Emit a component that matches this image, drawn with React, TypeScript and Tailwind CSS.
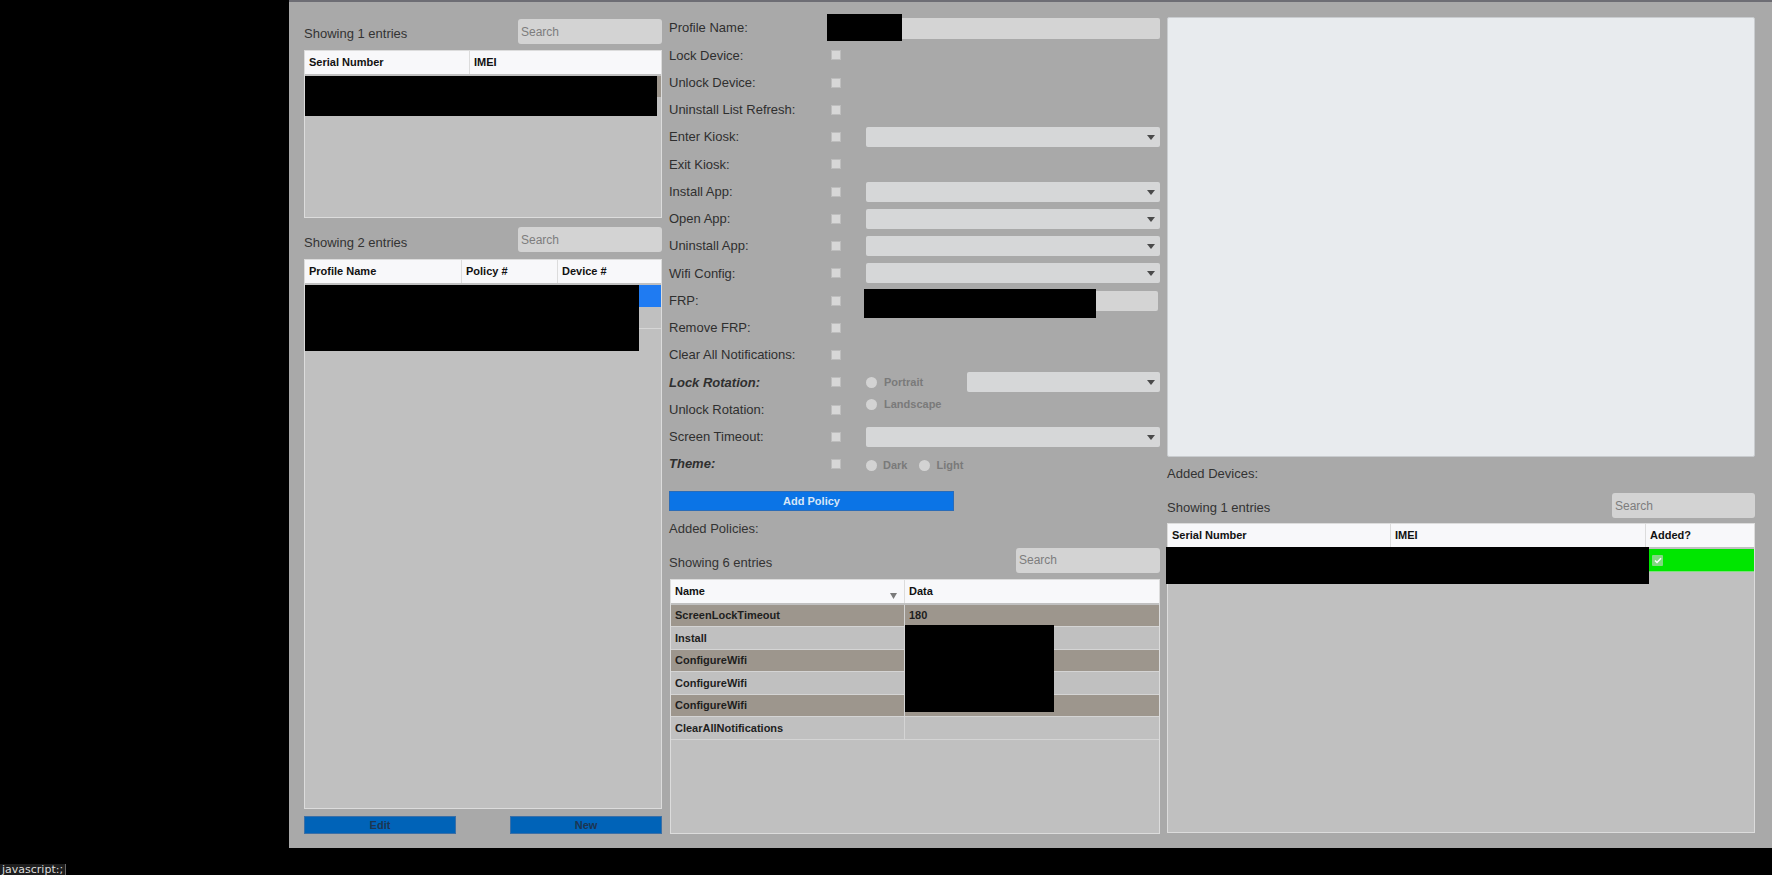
import React from "react";

const Caret = () => (
  <svg className="absolute right-[5px] top-[8px]" width="8" height="5" viewBox="0 0 8 5">
    <polygon points="0,0 8,0 4,5" fill="#4a4a4a" />
  </svg>
);

const SelectBox = ({ className = "" }: { className?: string }) => (
  <div className={`relative h-[20px] rounded-[2px] bg-[#d6d7d8] ${className}`}>
    <Caret />
  </div>
);

const SearchBox = ({ className = "" }: { className?: string }) => (
  <div
    className={`h-[25px] rounded-[3px] bg-[#d3d3d3] text-[12px] text-[#7d7d7d] flex items-center pl-[3px] ${className}`}
  >
    Search
  </div>
);

const Check = () => (
  <div className="w-[10px] h-[10px] bg-[#d7d7d7] border border-[#bdbdbd] shrink-0" />
);

const Radio = () => (
  <div className="w-[11px] h-[11px] rounded-full bg-[#d3d3d3] shrink-0" />
);

function Row({
  label,
  italic = false,
  children,
}: {
  label: string;
  italic?: boolean;
  children?: React.ReactNode;
}) {
  return (
    <div className="flex items-center h-[27.25px]">
      <div
        className={`w-[162px] text-[13px] text-[#2f2f2f] ${italic ? "font-bold italic" : ""}`}
      >
        {label}
      </div>
      <Check />
      <div className="flex-1 ml-[25px] flex items-center">{children}</div>
    </div>
  );
}

const HeaderCell = ({
  children,
  className = "",
}: {
  children?: React.ReactNode;
  className?: string;
}) => (
  <div
    className={`h-full flex items-center pl-[4px] text-[11px] font-bold text-[#111] border-r border-[#dcdcdc] ${className}`}
  >
    {children}
  </div>
);

export default function App() {
  const policies = [
    { name: "ScreenLockTimeout", data: "180", striped: true },
    { name: "Install", data: "", striped: false },
    { name: "ConfigureWifi", data: "", striped: true },
    { name: "ConfigureWifi", data: "", striped: false },
    { name: "ConfigureWifi", data: "", striped: true },
    { name: "ClearAllNotifications", data: "", striped: false },
  ];

  return (
    <div className="w-[1772px] h-[875px] bg-black relative overflow-hidden font-['Liberation_Sans',Arial,sans-serif]">
      <div className="flex h-[848px]">
        <div className="w-[289px] bg-black shrink-0" />
        <div className="flex-1 bg-[#a9a9a9] border-t-2 border-[#6d6d74] flex pl-[15px] pr-[17px] gap-[7px]">
          {/* LEFT COLUMN */}
          <div className="w-[358px] flex flex-col pt-[17px]">
            <div className="flex items-center justify-between h-[25px]">
              <div className="text-[13px] text-[#333] pt-[4px]">Showing 1 entries</div>
              <SearchBox className="w-[144px]" />
            </div>
            <div className="mt-[6px] h-[168px] flex flex-col border border-[#dcdcdc] bg-[#c0c0c0] relative">
              <div className="h-[23px] bg-[#f8f8fa] grid grid-cols-[165px_1fr] shrink-0">
                <HeaderCell>Serial Number</HeaderCell>
                <HeaderCell className="border-r-0">IMEI</HeaderCell>
              </div>
              <div className="h-[21px] mt-[2px] bg-[#9d968d]" />
              <div className="absolute left-0 top-[25px] w-[352px] h-[40px] bg-black" />
            </div>
            <div className="mt-[9px] flex items-center justify-between h-[25px]">
              <div className="text-[13px] text-[#333] pt-[6px]">Showing 2 entries</div>
              <SearchBox className="w-[144px]" />
            </div>
            <div className="mt-[7px] h-[550px] flex flex-col border border-[#dcdcdc] bg-[#c0c0c0] relative">
              <div className="h-[23px] bg-[#f8f8fa] grid grid-cols-[157px_96px_1fr] shrink-0">
                <HeaderCell>Profile Name</HeaderCell>
                <HeaderCell>Policy #</HeaderCell>
                <HeaderCell className="border-r-0">Device #</HeaderCell>
              </div>
              <div className="h-[22px] mt-[2px] bg-[#1f7bf2]" />
              <div className="h-[22px] border-b border-[#d6d6d6]" />
              <div className="absolute left-0 top-[25px] w-[334px] h-[66px] bg-black" />
            </div>
            <div className="mt-[7px] flex justify-between">
              <div className="w-[152px] h-[18px] bg-[#0063b8] border border-[#3b6fa6] flex items-center justify-center text-[11px] font-bold text-[#1d3552]">
                Edit
              </div>
              <div className="w-[152px] h-[18px] bg-[#0063b8] border border-[#3b6fa6] flex items-center justify-center text-[11px] font-bold text-[#1d3552]">
                New
              </div>
            </div>
          </div>

          {/* MIDDLE COLUMN */}
          <div className="w-[491px] flex flex-col pt-[12.5px]">
            <div className="flex items-center h-[27.25px]">
              <div className="w-[158px] text-[13px] text-[#2f2f2f]">Profile Name:</div>
              <div className="flex-1 h-[21px] bg-[#d4d4d4] rounded-[2px] relative">
                <div className="absolute left-0 top-[-4px] w-[75px] h-[27px] bg-black" />
              </div>
            </div>
            <Row label="Lock Device:" />
            <Row label="Unlock Device:" />
            <Row label="Uninstall List Refresh:" />
            <Row label="Enter Kiosk:">
              <SelectBox className="w-full" />
            </Row>
            <Row label="Exit Kiosk:" />
            <Row label="Install App:">
              <SelectBox className="w-full" />
            </Row>
            <Row label="Open App:">
              <SelectBox className="w-full" />
            </Row>
            <Row label="Uninstall App:">
              <SelectBox className="w-full" />
            </Row>
            <Row label="Wifi Config:">
              <SelectBox className="w-full" />
            </Row>
            <Row label="FRP:">
              <div className="w-full ml-[-2px] h-[20px] bg-[#d4d4d4] rounded-[2px] relative">
                <div className="absolute left-0 top-[-2px] w-[232px] h-[29px] bg-black" />
              </div>
            </Row>
            <Row label="Remove FRP:" />
            <Row label="Clear All Notifications:" />
            <div className="flex items-start h-[27.25px]">
              <div className="w-[162px] h-[27.25px] flex items-center text-[13px] font-bold italic text-[#2f2f2f]">
                Lock Rotation:
              </div>
              <div className="h-[27.25px] flex items-center">
                <Check />
              </div>
              <div className="flex-1 ml-[25px] flex items-start">
                <div className="w-[101px] flex flex-col mt-[2.6px]">
                  <div className="h-[22px] flex items-center gap-[7px]">
                    <Radio />
                    <span className="text-[11px] font-bold text-[#7a7a7a]">Portrait</span>
                  </div>
                  <div className="h-[22px] flex items-center gap-[7px]">
                    <Radio />
                    <span className="text-[11px] font-bold text-[#7a7a7a]">Landscape</span>
                  </div>
                </div>
                <SelectBox className="flex-1 mt-[3.6px]" />
              </div>
            </div>
            <Row label="Unlock Rotation:" />
            <Row label="Screen Timeout:">
              <SelectBox className="w-full" />
            </Row>
            <Row label="Theme:" italic>
              <div className="flex items-center gap-[6px] pt-[3px]">
                <Radio />
                <span className="text-[11px] font-bold text-[#7a7a7a] mr-[6px]">Dark</span>
                <Radio />
                <span className="text-[11px] font-bold text-[#7a7a7a]">Light</span>
              </div>
            </Row>
            <div className="mt-[13px] w-[285px] h-[20px] bg-[#0b74e6] border border-[#2a6cb8] flex items-center justify-center text-[11px] font-bold text-[#d6e6f8]">
              Add Policy
            </div>
            <div className="mt-[8px] h-[20px] flex items-center text-[13px] text-[#333]">
              Added Policies:
            </div>
            <div className="mt-[9px] flex items-center justify-between h-[25px]">
              <div className="text-[13px] text-[#333] pt-[4px]">Showing 6 entries</div>
              <SearchBox className="w-[144px]" />
            </div>
            <div className="mt-[6px] ml-[1px] h-[255px] flex flex-col border border-[#dcdcdc] bg-[#c0c0c0] relative">
              <div className="h-[23px] bg-[#f8f8fa] grid grid-cols-[234px_1fr] shrink-0">
                <HeaderCell className="relative">
                  Name
                  <svg className="absolute right-[7px] top-[13px]" width="7" height="6" viewBox="0 0 7 6">
                    <polygon points="0,0 7,0 3.5,6" fill="#7a7a7a" />
                  </svg>
                </HeaderCell>
                <HeaderCell className="border-r-0">Data</HeaderCell>
              </div>
              <div className="mt-[2px] flex flex-col">
                {policies.map((p, i) => (
                  <div
                    key={i}
                    className={`h-[22.5px] grid grid-cols-[234px_1fr] border-b border-[#d4d4d4] ${p.striped ? "bg-[#9d968d]" : "bg-[#c0c0c0]"}`}
                  >
                    <div className="flex items-center pl-[4px] text-[11px] font-bold text-[#1e1e1e] border-r border-[#d4d4d4]">
                      {p.name}
                    </div>
                    <div className="flex items-center pl-[4px] text-[11px] font-bold text-[#1e1e1e]">
                      {p.data}
                    </div>
                  </div>
                ))}
              </div>
              <div className="absolute left-[234px] top-[45px] w-[149px] h-[87px] bg-black" />
            </div>
          </div>

          {/* RIGHT COLUMN */}
          <div className="w-[588px] flex flex-col pt-[15px]">
            <div className="h-[440px] bg-[#e8ebee] border border-[#c9cccf] rounded-[2px]" />
            <div className="mt-[7px] h-[20px] flex items-center text-[13px] text-[#333]">
              Added Devices:
            </div>
            <div className="mt-[9px] flex items-center justify-between h-[25px]">
              <div className="text-[13px] text-[#333] pt-[4px]">Showing 1 entries</div>
              <SearchBox className="w-[143px]" />
            </div>
            <div className="mt-[5px] h-[310px] flex flex-col border border-[#dcdcdc] bg-[#c0c0c0] relative">
              <div className="h-[23px] bg-[#f8f8fa] grid grid-cols-[223px_255px_1fr] shrink-0">
                <HeaderCell>Serial Number</HeaderCell>
                <HeaderCell>IMEI</HeaderCell>
                <HeaderCell className="border-r-0">Added?</HeaderCell>
              </div>
              <div className="mt-[2px] h-[23px] grid grid-cols-[478px_1fr]">
                <div />
                <div className="bg-[#00e600] border-b border-[#7fe07f] flex items-center pl-[6px]">
                  <div className="w-[11px] h-[11px] bg-[#80d880] rounded-[1px] flex items-center justify-center">
                    <svg width="8" height="7" viewBox="0 0 8 7">
                      <polyline points="1,3.5 3,5.5 7,1.2" fill="none" stroke="#ffffff" strokeWidth="1.5" />
                    </svg>
                  </div>
                </div>
              </div>
              <div className="absolute left-[-2px] top-[23px] w-[483px] h-[37px] bg-black" />
            </div>
          </div>
        </div>
      </div>
      <div className="h-[27px] bg-black relative">
        <div className="absolute left-0 bottom-0 h-[11px] px-[2px] bg-[#1e1e1e] border-r border-[#6a6a6a] text-[11px] leading-[11px] text-[#dcdcdc] font-['DejaVu_Sans',sans-serif]">
          javascript:;
        </div>
      </div>
    </div>
  );
}
